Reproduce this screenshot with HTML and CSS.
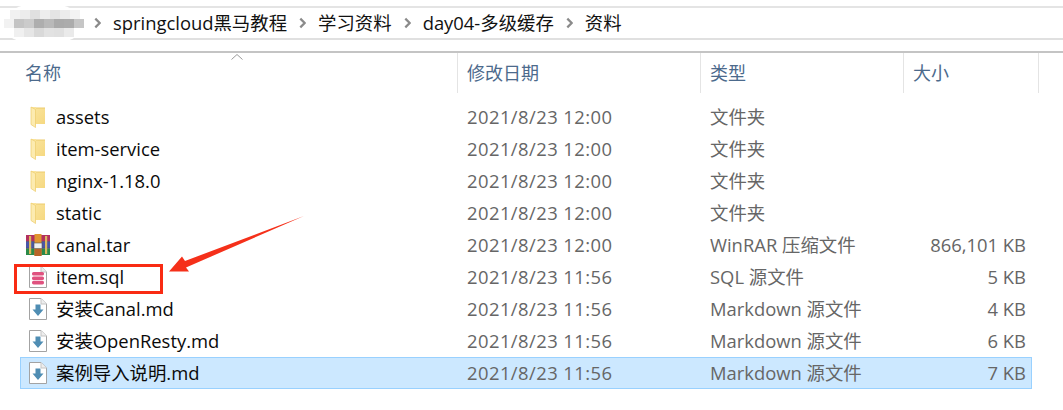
FILE: index.html
```html
<!DOCTYPE html>
<html lang="zh">
<head>
<meta charset="utf-8">
<title>资料</title>
<link rel="stylesheet" href="styles.css">
</head>
<body>
<svg width="0" height="0" class="defs">
  <defs>
    <linearGradient id="fold" x1="0" x2="1" y1="0" y2="1">
      <stop offset="0" stop-color="#fbe6a0"/><stop offset="1" stop-color="#f5d77e"/>
    </linearGradient>
    <symbol id="folder" viewBox="0 0 16 22">
      <path d="M1 1 L6 1 L6 2 H15 V18 H6 V21 Z" fill="url(#fold)"/>
      <path d="M1 1 L5.5 3.5 V21.5 L1 18.5 Z" fill="#fcebb0" stroke="#eccb6c" stroke-width=".7"/>
      <path d="M6 2 H15" stroke="#eccb6c" stroke-width="1"/>
    </symbol>
    <symbol id="doc" viewBox="0 0 18 22">
      <path d="M.5 .5 H12 L17.5 6 V21.5 H.5 Z" fill="#fff" stroke="#a3a3a3"/>
      <path d="M12 .5 V6 H17.5" fill="#eee" stroke="#c4c4c4"/>
    </symbol>
    <symbol id="md" viewBox="0 0 18 22">
      <use href="#doc"/>
      <path d="M6.5 6.5 H11.5 V11.5 H14.5 L9 18 L3.5 11.5 H6.5 Z" fill="#4f8db3"/>
    </symbol>
    <symbol id="sql" viewBox="0 0 18 22">
      <use href="#doc"/>
      <rect x="3" y="6" width="12" height="3.6" rx="1.6" fill="#e0527f"/>
      <rect x="3" y="10.4" width="12" height="3.6" rx="1.6" fill="#e0527f"/>
      <rect x="3" y="14.8" width="12" height="3.6" rx="1.6" fill="#e0527f"/>
    </symbol>
    <symbol id="rar" viewBox="0 0 24 22">
      <rect x="0" y="1" width="24" height="6.4" fill="#b23060"/>
      <rect x="0" y="7.6" width="24" height="6.6" fill="#4a55a8"/>
      <rect x="0" y="14.4" width="24" height="6.6" fill="#2c8a4a"/>
      <path d="M0 7.5 H24 M0 14.3 H24" stroke="#3a3050" stroke-width=".6"/>
      <rect x="3" y="2" width="2.2" height="18" fill="#dcb85e"/>
      <rect x="19" y="2" width="2.2" height="18" fill="#dcb85e"/>
      <rect x="8.5" y="0" width="7" height="22" fill="#e0952f"/>
      <rect x="8.5" y="15" width="7" height="7" fill="#b8652a"/>
      <rect x="8" y="9" width="8" height="5.5" fill="#efefef" stroke="#555" stroke-width=".6"/>
    </symbol>
  </defs>
</svg>

<header class="crumbs">
  <svg class="sep" viewBox="0 0 8 12"><path d="M1.5 1 L6.5 6 L1.5 11" fill="none" stroke="#8a8a8a" stroke-width="2.6"/></svg>
  <span class="crumb">springcloud黑马教程</span>
  <svg class="sep" viewBox="0 0 8 12"><path d="M1.5 1 L6.5 6 L1.5 11" fill="none" stroke="#8a8a8a" stroke-width="2.6"/></svg>
  <span class="crumb">学习资料</span>
  <svg class="sep" viewBox="0 0 8 12"><path d="M1.5 1 L6.5 6 L1.5 11" fill="none" stroke="#8a8a8a" stroke-width="2.6"/></svg>
  <span class="crumb">day04-多级缓存</span>
  <svg class="sep" viewBox="0 0 8 12"><path d="M1.5 1 L6.5 6 L1.5 11" fill="none" stroke="#8a8a8a" stroke-width="2.6"/></svg>
  <span class="crumb">资料</span>
</header>

<svg class="redact" viewBox="0 0 86 44">
  <ellipse cx="43" cy="22" rx="42" ry="21" fill="#fff"/>
  <g>
    <rect x="10" y="8" width="10" height="9" fill="#f1f1f1"/><rect x="20" y="8" width="10" height="9" fill="#ececec"/><rect x="30" y="8" width="10" height="9" fill="#e0e0e0"/><rect x="40" y="8" width="10" height="9" fill="#ededed"/><rect x="50" y="8" width="10" height="9" fill="#e4e4e4"/><rect x="60" y="8" width="10" height="9" fill="#ececec"/><rect x="70" y="8" width="10" height="9" fill="#f3f3f3"/>
    <rect x="14" y="17" width="10" height="9" fill="#c4c4c4"/><rect x="24" y="17" width="10" height="9" fill="#cbcbcb"/><rect x="34" y="17" width="10" height="9" fill="#aeaeae"/><rect x="44" y="17" width="10" height="9" fill="#b9b9b9"/><rect x="54" y="17" width="10" height="9" fill="#aaaaaa"/><rect x="64" y="17" width="10" height="9" fill="#acacac"/><rect x="74" y="17" width="10" height="9" fill="#c6c6c6"/>
    <rect x="4" y="17" width="10" height="9" fill="#f2f2f2"/>
    <rect x="14" y="26" width="10" height="9" fill="#f0f0f0"/><rect x="24" y="26" width="10" height="9" fill="#e6e6e6"/><rect x="34" y="26" width="10" height="9" fill="#d9d9d9"/><rect x="44" y="26" width="10" height="9" fill="#e2e2e2"/><rect x="54" y="26" width="10" height="9" fill="#e0e0e0"/><rect x="64" y="26" width="10" height="9" fill="#eaeaea"/>
  </g>
</svg>

<main class="list">
  <div class="head">
    <svg class="sort" viewBox="0 0 12 6"><path d="M.5 5.5 L6 .5 L11.5 5.5" fill="none" stroke="#9a9a9a"/></svg>
    <div class="hcell h-name">名称</div>
    <div class="hcell h-date">修改日期</div>
    <div class="hcell h-type">类型</div>
    <div class="hcell h-size">大小</div>
    <div class="hcell h-rest"></div>
  </div>

  <div class="rows">
    <div class="row"><span class="ico"><svg class="i-folder"><use href="#folder"/></svg></span><span class="name">assets</span><span class="meta date">2021/8/23 12:00</span><span class="meta">文件夹</span><span class="size"></span></div>
    <div class="row"><span class="ico"><svg class="i-folder"><use href="#folder"/></svg></span><span class="name">item-service</span><span class="meta date">2021/8/23 12:00</span><span class="meta">文件夹</span><span class="size"></span></div>
    <div class="row"><span class="ico"><svg class="i-folder"><use href="#folder"/></svg></span><span class="name">nginx-1.18.0</span><span class="meta date">2021/8/23 12:00</span><span class="meta">文件夹</span><span class="size"></span></div>
    <div class="row"><span class="ico"><svg class="i-folder"><use href="#folder"/></svg></span><span class="name">static</span><span class="meta date">2021/8/23 12:00</span><span class="meta">文件夹</span><span class="size"></span></div>
    <div class="row"><span class="ico"><svg class="i-rar"><use href="#rar"/></svg></span><span class="name">canal.tar</span><span class="meta date">2021/8/23 12:00</span><span class="meta">WinRAR 压缩文件</span><span class="size">866,101 KB</span></div>
    <div class="row"><span class="ico"><svg class="i-doc"><use href="#sql"/></svg></span><span class="name">item.sql</span><span class="meta date">2021/8/23 11:56</span><span class="meta">SQL 源文件</span><span class="size">5 KB</span></div>
    <div class="row"><span class="ico"><svg class="i-doc"><use href="#md"/></svg></span><span class="name">安装Canal.md</span><span class="meta date">2021/8/23 11:56</span><span class="meta">Markdown 源文件</span><span class="size">4 KB</span></div>
    <div class="row"><span class="ico"><svg class="i-doc"><use href="#md"/></svg></span><span class="name">安装OpenResty.md</span><span class="meta date">2021/8/23 11:56</span><span class="meta">Markdown 源文件</span><span class="size">6 KB</span></div>
    <div class="row selected"><span class="ico"><svg class="i-doc"><use href="#md"/></svg></span><span class="name">案例导入说明.md</span><span class="meta date">2021/8/23 11:56</span><span class="meta">Markdown 源文件</span><span class="size">7 KB</span></div>
  </div>
</main>

<div class="highlight"></div>
<svg class="arrow" viewBox="0 0 140 60"><path d="M136 1 L17 46 L14 41.5 L1 56.5 L21 56.5 L18 52.5 Z" fill="#f5301a"/></svg>
</body>
</html>
```

FILE: styles.css
```css
* { box-sizing: border-box; }

html, body {
  margin: 0;
  padding: 0;
  background: #fff;
}

body {
  width: 1063px;
  height: 410px;
  overflow: hidden;
  position: relative;
  padding-top: 6px;
  font-family: "Open Sans", "Noto Sans CJK SC", sans-serif;
  font-size: 18.4px;
  color: #000;
}

.defs { position: absolute; }

.crumbs {
  height: 34px;
  border-top: 2px solid #e4e4e4;
  border-bottom: 2px solid #e0e0e0;
  padding-left: 94px;
  display: flex;
  align-items: center;
  gap: 12px;
}

.crumb { color: #111; line-height: 30px; }

.sep { width: 7px; height: 12px; }

.redact {
  position: absolute;
  left: 0;
  top: 2px;
  width: 86px;
  height: 44px;
}

.list { margin-top: 11px; }

.head {
  position: relative;
  display: grid;
  grid-template-columns: 458px 243px 203px 135px 1fr;
  height: 41px;
  border-top: 2px solid #c4c4c4;
}

.sort {
  position: absolute;
  left: 231px;
  top: 1px;
  width: 12px;
  height: 6px;
}

.hcell {
  color: #4c6a8c;
  line-height: 40px;
  padding-left: 9px;
  border-right: 1.5px solid #e4e4e4;
  font-size: 18px;
}

.h-name { padding-left: 25px; }
.h-rest { border-right: 0; }

.rows {
  margin-top: 9px;
  margin-left: 20px;
  width: 1012px;
}

.row {
  display: grid;
  grid-template-columns: 36px 411px 243px 1fr 130px;
  align-items: center;
  height: 32px;
  line-height: 24px;
}

.ico {
  display: flex;
  justify-content: center;
  padding-left: 1px;
}

.i-folder { width: 16px; height: 22px; margin-left: -1px; }
.i-rar { width: 24px; height: 22px; margin-left: -1px; }
.i-doc { width: 18px; height: 22px; margin-left: -1px; }

.name { color: #0a0a0a; white-space: nowrap; }
.meta { color: #666; white-space: nowrap; }
.date { letter-spacing: .45px; }
.size { color: #666; text-align: right; padding-right: 6px; white-space: nowrap; }

.selected {
  background: #cce8ff;
  box-shadow: inset 0 0 0 1px #99d1ff;
}

.highlight {
  position: absolute;
  left: 14px;
  top: 264px;
  width: 149px;
  height: 30px;
  border: 3px solid #f92b13;
}

.arrow {
  position: absolute;
  left: 168px;
  top: 215px;
  width: 140px;
  height: 60px;
}
```
